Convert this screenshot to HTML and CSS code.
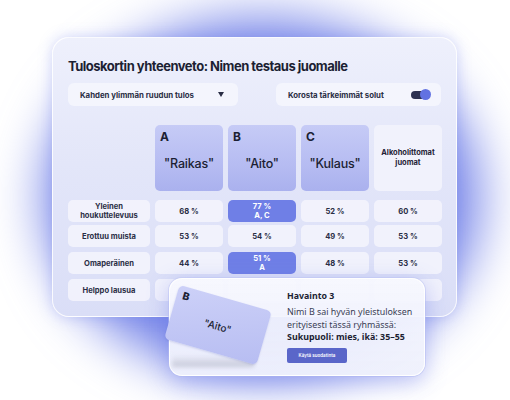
FILE: index.html
```html
<!DOCTYPE html>
<html lang="fi">
<head>
<meta charset="utf-8">
<link rel="stylesheet" href="styles.css">
</head>
<body>
<div class="stage">
  <div class="glow"></div>
  <div class="card">
    <h1 class="title">Tuloskortin yhteenveto: Nimen testaus juomalle</h1>
    <div class="controls">
      <div class="control dropdown">
        <span>Kahden ylimmän ruudun tulos</span>
        <span class="caret"></span>
      </div>
      <div class="control toggle-box">
        <span>Korosta tärkeimmät solut</span>
        <span class="toggle"><span class="knob"></span></span>
      </div>
    </div>
    <div class="grid">
      <div class="blank"></div>
      <div class="head name-head"><span class="letter">A</span><span class="name">"Raikas"</span></div>
      <div class="head name-head"><span class="letter">B</span><span class="name">"Aito"</span></div>
      <div class="head name-head"><span class="letter">C</span><span class="name">"Kulaus"</span></div>
      <div class="head group-head">Alkoholittomat<br>juomat</div>

      <div class="cell label">Yleinen<br>houkuttelevuus</div>
      <div class="cell">68 %</div>
      <div class="cell hi">77 %<br>A, C</div>
      <div class="cell">52 %</div>
      <div class="cell">60 %</div>

      <div class="cell label">Erottuu muista</div>
      <div class="cell">53 %</div>
      <div class="cell">54 %</div>
      <div class="cell">49 %</div>
      <div class="cell">53 %</div>

      <div class="cell label">Omaperäinen</div>
      <div class="cell">44 %</div>
      <div class="cell hi">51 %<br>A</div>
      <div class="cell">48 %</div>
      <div class="cell">53 %</div>

      <div class="cell label">Helppo lausua</div>
      <div class="cell"></div>
      <div class="cell"></div>
      <div class="cell"></div>
      <div class="cell"></div>
    </div>
  </div>

  <div class="popup">
    <div class="floor-shadow"></div>
    <div class="mini-card">
      <span class="mini-letter">B</span>
      <span class="mini-name">"Aito"</span>
    </div>
    <div class="popup-text">
      <div class="popup-title">Havainto 3</div>
      <p class="popup-body">Nimi B sai hyvän yleistuloksen erityisesti tässä ryhmässä:<br><b>Sukupuoli: mies, ikä: 35–55</b></p>
      <div class="btn">Käytä suodatinta</div>
    </div>
  </div>
</div>
</body>
</html>
```
FILE: styles.css
```css
html, body {
  margin: 0;
  padding: 0;
  background: #ffffff;
}
body {
  width: 510px;
  height: 400px;
  overflow: hidden;
  font-family: Inter, "Liberation Sans", sans-serif;
  color: #1f2340;
}
.stage {
  position: relative;
  width: 510px;
  height: 400px;
  padding: 37px 0 0 52px;
  box-sizing: border-box;
}
.glow {
  position: absolute;
  left: 44px;
  top: 18px;
  width: 436px;
  height: 360px;
  border-radius: 50%;
  background: rgba(100, 116, 230, 0.9);
  filter: blur(26px);
}
.card {
  position: relative;
  width: 405px;
  height: 280px;
  box-sizing: border-box;
  padding: 20px 15px 0 15px;
  border-radius: 17px;
  background: linear-gradient(180deg, #eef0fc 0%, #e3e6f9 45%, #dadef7 100%);
  border: 1px solid rgba(255, 255, 255, 0.85);
  box-shadow: 0 0 14px rgba(120, 135, 235, 0.35);
}
.title {
  margin: 0;
  font-size: 13px;
  line-height: 16px;
  font-weight: 700;
  letter-spacing: -0.5px;
  color: #1c1f33;
}
.controls {
  display: flex;
  justify-content: space-between;
  margin-top: 9px;
}
.control {
  display: flex;
  align-items: center;
  justify-content: space-between;
  height: 23px;
  box-sizing: border-box;
  padding: 0 12px;
  border-radius: 6px;
  background: rgba(246, 247, 254, 0.8);
  font-size: 7.8px;
  font-weight: 700;
  color: #2a2e45;
}
.dropdown { width: 170px; padding-right: 14px; }
.toggle-box { width: 165px; padding-right: 11px; }
.caret {
  width: 0;
  height: 0;
  border-left: 3.5px solid transparent;
  border-right: 3.5px solid transparent;
  border-top: 5px solid #2a2e45;
}
.toggle {
  position: relative;
  width: 19px;
  height: 8px;
  border-radius: 4px;
  background: #2c3050;
}
.knob {
  position: absolute;
  right: -1px;
  top: -1.5px;
  width: 11px;
  height: 11px;
  border-radius: 50%;
  background: #6272e2;
}
.grid {
  display: grid;
  grid-template-columns: 82px repeat(4, 68px);
  grid-template-rows: 68px 22px 22px 22px 22px;
  column-gap: 5px;
  row-gap: 5px;
  margin-top: 19px;
}
.head {
  border-radius: 5px;
  box-sizing: border-box;
}
.name-head {
  display: flex;
  flex-direction: column;
  padding: 5px 5px 0 5px;
  margin-bottom: 2px;
  background: linear-gradient(180deg, #c6cbf6 0%, #b6bcf2 60%, #aab1ee 100%);
}
.letter {
  font-size: 12px;
  font-weight: 700;
  line-height: 14px;
  color: #1c1f33;
}
.name {
  margin-top: 12px;
  text-align: center;
  font-size: 12.5px;
  font-weight: 500;
  letter-spacing: -0.2px;
  color: #1c1f33;
}
.group-head {
  display: flex;
  align-items: center;
  justify-content: center;
  text-align: center;
  margin-bottom: 2px;
  background: #f1f2fc;
  font-size: 7.5px;
  font-weight: 700;
  line-height: 10px;
  color: #1f2236;
}
.cell {
  display: flex;
  align-items: center;
  justify-content: center;
  text-align: center;
  border-radius: 5px;
  background: rgba(244, 245, 253, 0.85);
  font-size: 7.6px;
  font-weight: 700;
  line-height: 9px;
  color: #2a2e45;
}
.grid .cell:nth-child(n+6):nth-child(-n+10) { margin-top: 2px; margin-bottom: -2px; }
.cell.hi {
  background: #6f7fe6;
  color: #ffffff;
}
.popup {
  position: absolute;
  left: 169px;
  top: 278px;
  width: 256px;
  height: 98px;
  box-sizing: border-box;
  border-radius: 13px;
  background: linear-gradient(180deg, rgba(247, 248, 254, 0.92) 0%, rgba(238, 240, 252, 0.96) 100%);
  border: 1px solid rgba(255, 255, 255, 0.9);
  box-shadow: 0 6px 22px rgba(110, 125, 232, 0.45), 0 0 0 1px rgba(200, 206, 245, 0.5);
  padding: 11px 0 0 117px;
}
.floor-shadow {
  position: absolute;
  left: 2px;
  top: 76px;
  width: 82px;
  height: 12px;
  background: linear-gradient(180deg, rgba(180, 182, 196, 0) 0%, rgba(150, 152, 170, 0.45) 100%);
  filter: blur(2px);
}
.mini-card {
  position: absolute;
  left: 0;
  top: 18px;
  width: 96px;
  height: 56px;
  border-radius: 5px;
  background: linear-gradient(160deg, #cdd1f8 0%, #b7bdf2 100%);
  transform: rotate(16deg);
  box-shadow: 0 1px 2px rgba(90, 100, 180, 0.2);
}
.mini-letter {
  position: absolute;
  left: 6px;
  top: 3px;
  font-size: 10.5px;
  font-weight: 800;
  color: #1c1f33;
}
.mini-name {
  position: absolute;
  left: 0;
  right: 0;
  top: 23px;
  text-align: center;
  font-size: 10px;
  font-weight: 500;
  color: #1c1f33;
}
.popup-text {
  display: flex;
  flex-direction: column;
  align-items: flex-start;
}
.popup-title {
  font-family: "Noto Sans", "Open Sans", sans-serif;
  font-size: 8.8px;
  font-weight: 700;
  line-height: 12px;
  color: #1c1f33;
}
.popup-body {
  margin: 4px 0 0 0;
  width: 134px;
  font-family: "Noto Sans", "Open Sans", sans-serif;
  font-size: 8.9px;
  line-height: 12.5px;
  color: #3a3e55;
}
.popup-body b { color: #1c1f33; }
.btn {
  margin-top: 4px;
  width: 60px;
  height: 15px;
  display: flex;
  align-items: center;
  justify-content: center;
  border-radius: 2px;
  background: #5a66c9;
  color: #ffffff;
  font-size: 4.5px;
  font-weight: 600;
}
```
